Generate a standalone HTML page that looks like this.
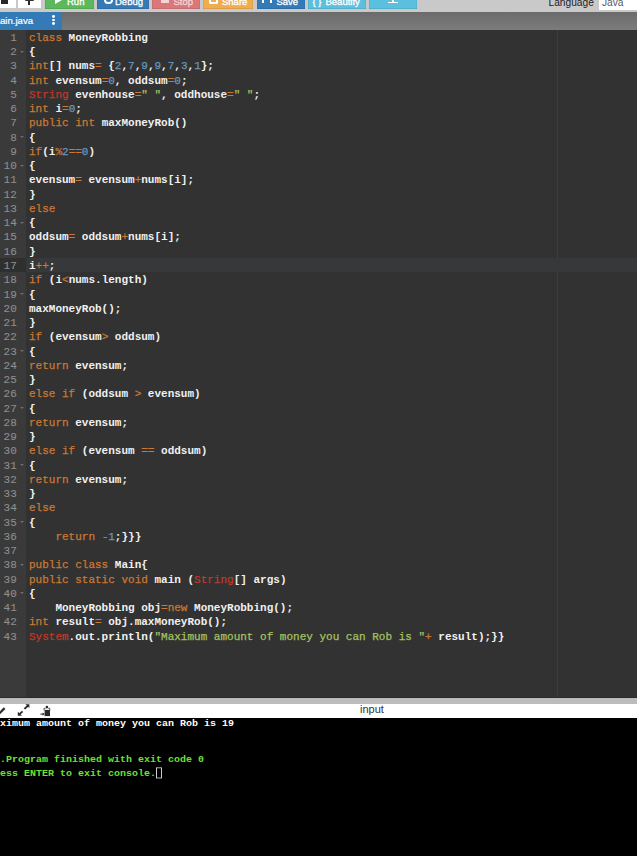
<!DOCTYPE html>
<html><head><meta charset="utf-8">
<style>
*{margin:0;padding:0;box-sizing:border-box}
html,body{width:637px;height:856px;overflow:hidden;background:#323232;font-family:"Liberation Sans",sans-serif}
#top{position:absolute;left:0;top:0;width:637px;height:12px;background:#c9c9c9;overflow:hidden}
.btn{position:absolute;top:0;height:8.8px;box-shadow:inset 0 -1px 0 rgba(0,0,0,.08), inset 1px 0 0 rgba(0,0,0,.06), inset -1px 0 0 rgba(0,0,0,.06);color:#fff;font-size:9.5px;line-height:11px;white-space:nowrap;overflow:hidden}
.btn span{position:absolute;top:-4.5px;-webkit-text-stroke:0.3px currentColor}
.btn .ic{position:absolute;display:block}
#tabs{position:absolute;left:0;top:12px;width:637px;height:18px;background:linear-gradient(#6b6b6b,#7c7c7c)}
#tab{position:absolute;left:0;top:0;width:62px;height:18px;background:#337ab7;color:#fff;font-size:9.6px;line-height:18px}
.dot{position:absolute;left:52px;width:2.9px;height:2.9px;border-radius:50%;background:#fff}
#ed{position:absolute;left:0;top:30px;width:637px;height:668px;background:#323232;border-bottom:1px solid #2a2a2a}
#gut{position:absolute;left:0;top:0;width:26px;height:667px;background:#3a3a3a}
#pm{position:absolute;left:557px;top:0;width:1px;height:667px;background:#3d3d3d}
.ln{position:absolute;left:0;width:637px;height:14.26px;font-family:"Liberation Mono",monospace;font-size:11px;line-height:14.26px;white-space:pre}
.ln.cur::before{content:"";position:absolute;left:0;top:-0.9px;width:637px;height:14.1px;background:linear-gradient(90deg,#2f2f2f 26px,#36383a 26px)}
.ln .g{position:absolute;left:0;width:16.8px;text-align:right;color:#8e8e8e;font-size:11px;-webkit-text-stroke:0.1px #8e8e8e;transform:scaleY(1.04);transform-origin:50% 78%}
.ln .f{position:absolute;left:20.2px;top:5.5px;width:0;height:0;border-left:2px solid transparent;border-right:2px solid transparent;border-top:2.6px solid #6c6c6c}
.ln .c{position:absolute;left:29px}
.k,.n,.s,.t,.o{-webkit-text-stroke:0.25px currentColor}.k{color:#cc7832}.n{color:#6897bb}.s{color:#a5c261}.t{color:#c0392b}.o{color:#cc7832}.i{color:#f0f0f0;font-weight:bold}
#split{position:absolute;left:0;top:698px;width:637px;height:5.5px;background:#bcbcbc}
#chead{position:absolute;left:0;top:703.5px;width:637px;height:14.5px;background:#fff;color:#444;font-size:11px;line-height:14px}
#con{position:absolute;left:0;top:718px;width:637px;height:138px;background:#000;font-family:"Liberation Mono",monospace;font-size:10px;color:#fff;white-space:pre;font-weight:bold;overflow:hidden}
.cl{position:absolute;left:-12px;height:12px;line-height:12px;transform:scaleY(0.85);transform-origin:0 9.3px}
.gr{color:#6be234}
.cur2{display:inline-block;width:6px;height:13px;border:1px solid #ccc;border-top-width:1.2px;border-bottom-width:1.2px;vertical-align:-2.6px;margin-left:0}
</style></head><body>
<div id="top">
<div class="btn" style="left:0;width:16px;height:7.8px;box-shadow:none;background:#fff"><i class="ic" style="left:0.8px;top:-4px;width:7px;height:7.8px;background:#26262e"></i></div>
<div class="btn" style="left:18px;width:23px;height:7.8px;box-shadow:none;background:#fff"><i class="ic" style="left:10.4px;top:-2px;width:1.4px;height:6.6px;background:#26262e"></i><i class="ic" style="left:6.5px;top:-1.5px;width:9px;height:2.3px;background:#333;border-radius:1px"></i></div>
<div class="btn" style="left:45px;width:48.5px;background:#5cb85c"><i class="ic" style="left:10.3px;top:-4.4px;border-left:7px solid #fff;border-top:4.2px solid transparent;border-bottom:4.2px solid transparent"></i><span style="left:22px">Run</span></div>
<div class="btn" style="left:97px;width:51.5px;background:#337ab7"><i class="ic" style="left:7px;top:-4.5px;width:8.5px;height:8.5px;border:2px solid #fff;border-radius:50%"></i><span style="left:18px">Debug</span></div>
<div class="btn" style="left:152px;width:47.5px;background:#d9777a"><i class="ic" style="left:9px;top:-3px;width:8px;height:6px;background:#f3d5d6"></i><span style="left:21.5px;color:#f3d5d6">Stop</span></div>
<div class="btn" style="left:203px;width:50px;background:#f0ad4e"><i class="ic" style="left:6px;top:-3px;width:9px;height:6.6px;border:2px solid #fff;border-top:0;border-radius:0 0 2px 2px"></i><span style="left:19px">Share</span></div>
<div class="btn" style="left:256.5px;width:48.5px;background:#337ab7"><i class="ic" style="left:5px;top:-3px;width:2.4px;height:6.4px;background:#fff"></i><i class="ic" style="left:13px;top:-3px;width:2.4px;height:6.4px;background:#fff"></i><span style="left:20px">Save</span></div>
<div class="btn" style="left:307.5px;width:58px;background:#5bc0de"><span style="left:5px">{ }</span><span style="left:18px">Beautify</span></div>
<div class="btn" style="left:369px;width:47.5px;background:#5bc0de"><i class="ic" style="left:19.3px;top:1.6px;width:9.4px;height:1.8px;background:#fff"></i><i class="ic" style="left:22.8px;top:-2px;width:2.6px;height:4px;background:#fff"></i></div>
<span style="position:absolute;left:548.5px;top:-3.5px;font-size:10.2px;line-height:12px;color:#1c1c2a">Language</span>
<div style="position:absolute;left:599px;top:-6px;width:38px;height:15.7px;background:#fff"><span style="position:absolute;left:3px;top:2.5px;font-size:10.2px;line-height:12px;color:#555a70">Java</span></div>
</div>
<div id="tabs"><div id="tab"><span style="position:absolute;left:-8px;top:0px;-webkit-text-stroke:0.2px #fff">main.java</span><i class="dot" style="top:2.8px"></i><i class="dot" style="top:6.6px"></i><i class="dot" style="top:10.4px"></i></div></div>
<div id="ed"><div id="gut"></div><div id="pm"></div></div>
<div id="code" style="position:absolute;left:0;top:0">
<div class="ln" style="top:30.90px"><span class="g">1</span><span class="c"><span class="k">class</span><span class="i"> MoneyRobbing</span></span></div>
<div class="ln" style="top:45.16px"><span class="g">2</span><span class="f"></span><span class="c"><span class="i">{</span></span></div>
<div class="ln" style="top:59.41px"><span class="g">3</span><span class="c"><span class="k">int</span><span class="i">[] nums</span><span class="o">=</span><span class="i"> {</span><span class="n">2</span><span class="i">,</span><span class="n">7</span><span class="i">,</span><span class="n">9</span><span class="i">,</span><span class="n">9</span><span class="i">,</span><span class="n">7</span><span class="i">,</span><span class="n">3</span><span class="i">,</span><span class="n">1</span><span class="i">};</span></span></div>
<div class="ln" style="top:73.67px"><span class="g">4</span><span class="c"><span class="k">int</span><span class="i"> evensum</span><span class="o">=</span><span class="n">0</span><span class="i">, oddsum</span><span class="o">=</span><span class="n">0</span><span class="i">;</span></span></div>
<div class="ln" style="top:87.92px"><span class="g">5</span><span class="c"><span class="t">String</span><span class="i"> evenhouse</span><span class="o">=</span><span class="s">" "</span><span class="i">, oddhouse</span><span class="o">=</span><span class="s">" "</span><span class="i">;</span></span></div>
<div class="ln" style="top:102.18px"><span class="g">6</span><span class="c"><span class="k">int</span><span class="i"> i</span><span class="o">=</span><span class="n">0</span><span class="i">;</span></span></div>
<div class="ln" style="top:116.44px"><span class="g">7</span><span class="c"><span class="k">public</span><span class="i"> </span><span class="k">int</span><span class="i"> maxMoneyRob()</span></span></div>
<div class="ln" style="top:130.69px"><span class="g">8</span><span class="f"></span><span class="c"><span class="i">{</span></span></div>
<div class="ln" style="top:144.95px"><span class="g">9</span><span class="c"><span class="k">if</span><span class="i">(i</span><span class="o">%</span><span class="n">2</span><span class="o">==</span><span class="n">0</span><span class="i">)</span></span></div>
<div class="ln" style="top:159.20px"><span class="g">10</span><span class="f"></span><span class="c"><span class="i">{</span></span></div>
<div class="ln" style="top:173.46px"><span class="g">11</span><span class="c"><span class="i">evensum</span><span class="o">=</span><span class="i"> evensum</span><span class="o">+</span><span class="i">nums[i];</span></span></div>
<div class="ln" style="top:187.72px"><span class="g">12</span><span class="c"><span class="i">}</span></span></div>
<div class="ln" style="top:201.97px"><span class="g">13</span><span class="c"><span class="k">else</span></span></div>
<div class="ln" style="top:216.23px"><span class="g">14</span><span class="f"></span><span class="c"><span class="i">{</span></span></div>
<div class="ln" style="top:230.48px"><span class="g">15</span><span class="c"><span class="i">oddsum</span><span class="o">=</span><span class="i"> oddsum</span><span class="o">+</span><span class="i">nums[i];</span></span></div>
<div class="ln" style="top:244.74px"><span class="g">16</span><span class="c"><span class="i">}</span></span></div>
<div class="ln cur" style="top:259.00px"><span class="g">17</span><span class="c"><span class="i">i</span><span class="o">++</span><span class="i">;</span></span></div>
<div class="ln" style="top:273.25px"><span class="g">18</span><span class="c"><span class="k">if</span><span class="i"> (i</span><span class="o">&lt;</span><span class="i">nums.length)</span></span></div>
<div class="ln" style="top:287.51px"><span class="g">19</span><span class="f"></span><span class="c"><span class="i">{</span></span></div>
<div class="ln" style="top:301.76px"><span class="g">20</span><span class="c"><span class="i">maxMoneyRob();</span></span></div>
<div class="ln" style="top:316.02px"><span class="g">21</span><span class="c"><span class="i">}</span></span></div>
<div class="ln" style="top:330.28px"><span class="g">22</span><span class="c"><span class="k">if</span><span class="i"> (evensum</span><span class="o">&gt;</span><span class="i"> oddsum)</span></span></div>
<div class="ln" style="top:344.53px"><span class="g">23</span><span class="f"></span><span class="c"><span class="i">{</span></span></div>
<div class="ln" style="top:358.79px"><span class="g">24</span><span class="c"><span class="k">return</span><span class="i"> evensum;</span></span></div>
<div class="ln" style="top:373.04px"><span class="g">25</span><span class="c"><span class="i">}</span></span></div>
<div class="ln" style="top:387.30px"><span class="g">26</span><span class="c"><span class="k">else</span><span class="i"> </span><span class="k">if</span><span class="i"> (oddsum </span><span class="o">&gt;</span><span class="i"> evensum)</span></span></div>
<div class="ln" style="top:401.56px"><span class="g">27</span><span class="f"></span><span class="c"><span class="i">{</span></span></div>
<div class="ln" style="top:415.81px"><span class="g">28</span><span class="c"><span class="k">return</span><span class="i"> evensum;</span></span></div>
<div class="ln" style="top:430.07px"><span class="g">29</span><span class="c"><span class="i">}</span></span></div>
<div class="ln" style="top:444.32px"><span class="g">30</span><span class="c"><span class="k">else</span><span class="i"> </span><span class="k">if</span><span class="i"> (evensum </span><span class="o">==</span><span class="i"> oddsum)</span></span></div>
<div class="ln" style="top:458.58px"><span class="g">31</span><span class="f"></span><span class="c"><span class="i">{</span></span></div>
<div class="ln" style="top:472.84px"><span class="g">32</span><span class="c"><span class="k">return</span><span class="i"> evensum;</span></span></div>
<div class="ln" style="top:487.09px"><span class="g">33</span><span class="c"><span class="i">}</span></span></div>
<div class="ln" style="top:501.35px"><span class="g">34</span><span class="c"><span class="k">else</span></span></div>
<div class="ln" style="top:515.60px"><span class="g">35</span><span class="f"></span><span class="c"><span class="i">{</span></span></div>
<div class="ln" style="top:529.86px"><span class="g">36</span><span class="c"><span class="i">    </span><span class="k">return</span><span class="i"> </span><span class="o">-</span><span class="n">1</span><span class="i">;}}}</span></span></div>
<div class="ln" style="top:544.12px"><span class="g">37</span><span class="c"></span></div>
<div class="ln" style="top:558.37px"><span class="g">38</span><span class="f"></span><span class="c"><span class="k">public</span><span class="i"> </span><span class="k">class</span><span class="i"> Main{</span></span></div>
<div class="ln" style="top:572.63px"><span class="g">39</span><span class="c"><span class="k">public</span><span class="i"> </span><span class="k">static</span><span class="i"> </span><span class="k">void</span><span class="i"> main (</span><span class="t">String</span><span class="i">[] args)</span></span></div>
<div class="ln" style="top:586.88px"><span class="g">40</span><span class="f"></span><span class="c"><span class="i">{</span></span></div>
<div class="ln" style="top:601.14px"><span class="g">41</span><span class="c"><span class="i">    MoneyRobbing obj</span><span class="o">=</span><span class="k">new</span><span class="i"> MoneyRobbing();</span></span></div>
<div class="ln" style="top:615.40px"><span class="g">42</span><span class="c"><span class="k">int</span><span class="i"> result</span><span class="o">=</span><span class="i"> obj.maxMoneyRob();</span></span></div>
<div class="ln" style="top:629.65px"><span class="g">43</span><span class="c"><span class="t">System</span><span class="i">.out.println(</span><span class="s">"Maximum amount of money you can Rob is "</span><span class="o">+</span><span class="i"> result);}}</span></span></div>
</div>
<div id="split"></div>
<div id="chead"><svg style="position:absolute;left:0;top:0" width="64" height="14.5" viewBox="0 703.5 64 14.5">
<path d="M-1 713.2 L4.6 707.6" stroke="#2a2a2a" stroke-width="2.2" fill="none"/>
<path d="M24.4 708.4 L28 705.2" stroke="#2a2a2a" stroke-width="1.9" fill="none"/>
<path d="M25.4 703.8 L29.4 703.8 L29.4 707.6 Z" fill="#2a2a2a"/>
<path d="M22.6 710.9 L19.2 713.9" stroke="#2a2a2a" stroke-width="1.9" fill="none"/>
<path d="M17.8 711.2 L17.8 715.2 L22 715.2 Z" fill="#2a2a2a"/>
<rect x="44.6" y="709.4" width="5.4" height="6.2" fill="#2a2a2a"/>
<path d="M44 710 L44 707.8 L45.6 707.8 M48.2 707.8 L49.8 707.8 L49.8 710" fill="none" stroke="#444" stroke-width="0.9"/><circle cx="46.9" cy="706.6" r="1.3" fill="#2a2a2a"/>
<path d="M40.4 713.6 L44 713.6" stroke="#2a2a2a" stroke-width="1"/>
<path d="M42.6 712 L44.6 713.6 L42.6 715.2 Z" fill="#2a2a2a"/>
</svg><span style="position:absolute;left:360px;top:-2px;color:#333">input</span></div>
<div id="con"><div class="cl" style="top:0.4px">Maximum amount of money you can Rob is 19</div><div class="cl gr" style="top:36.4px">...Program finished with exit code 0</div><div class="cl gr" style="top:48.4px">Press ENTER to exit console.<span class="cur2"></span></div></div>
</body></html>
